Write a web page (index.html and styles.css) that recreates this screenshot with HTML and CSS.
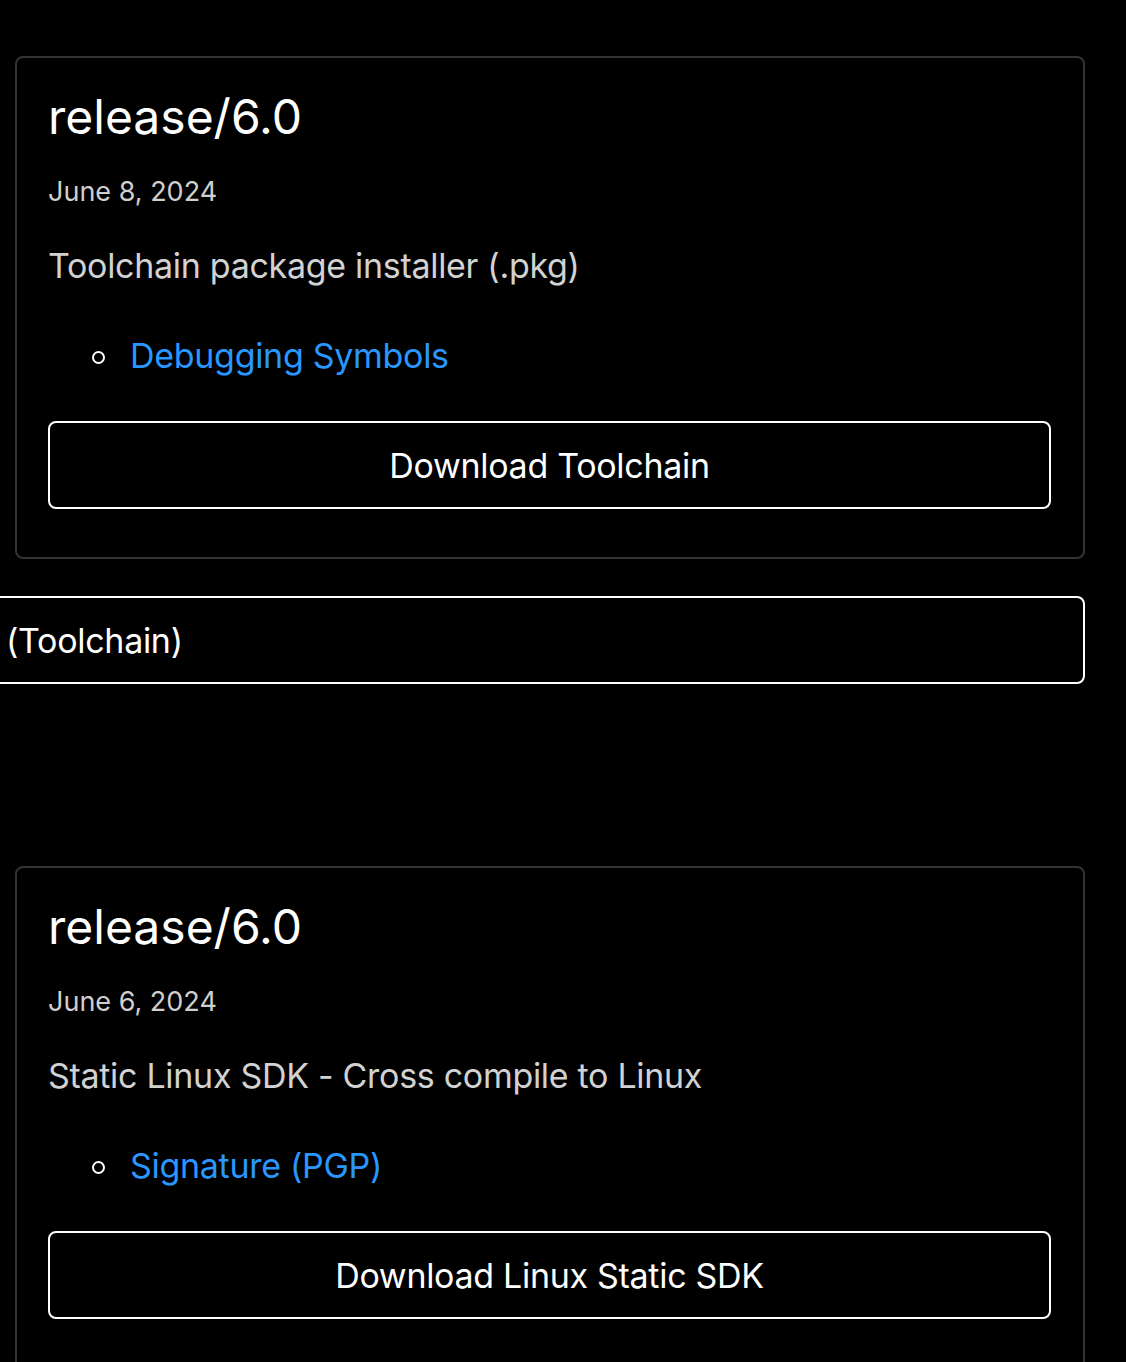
FILE: index.html
```html
<!DOCTYPE html>
<html lang="en">
<head>
<meta charset="utf-8">
<title>Releases</title>
<link rel="stylesheet" href="styles.css">
</head>
<body>
<main class="page">
  <section class="card">
    <h3 class="title">release/6.0</h3>
    <p class="date">June 8, 2024</p>
    <p class="desc">Toolchain package installer (.pkg)</p>
    <ul class="links">
      <li><a href="#">Debugging Symbols</a></li>
    </ul>
    <a class="btn" href="#">Download Toolchain</a>
  </section>

  <a class="btn btn-wide" href="#">(Toolchain)</a>

  <section class="card card-second">
    <h3 class="title">release/6.0</h3>
    <p class="date">June 6, 2024</p>
    <p class="desc">Static Linux SDK - Cross compile to Linux</p>
    <ul class="links">
      <li><a href="#">Signature (PGP)</a></li>
    </ul>
    <a class="btn" href="#">Download Linux Static SDK</a>
  </section>
</main>
</body>
</html>
```
FILE: styles.css
```css
html, body {
  margin: 0;
  padding: 0;
  background: #000;
  overflow: hidden;
}

body {
  font-family: Inter, "Noto Sans", "Liberation Sans", sans-serif;
  color: #fff;
}

.page {
  display: flex;
  flex-direction: column;
  padding: 56px 41px 0 15px;
}

.card {
  border: 2px solid #333;
  border-radius: 8px;
  padding: 30px 32px 32px 31px;
  display: flex;
  flex-direction: column;
}

.card-second {
  margin-top: 182px;
  padding-bottom: 200px;
}

.title {
  margin: 0;
  font-size: 48px;
  font-weight: 400;
  line-height: 58px;
  letter-spacing: 0;
  color: #fff;
}

.date {
  margin: 28px 0 0;
  font-size: 27px;
  line-height: 36px;
  color: #cfcfcf;
}

.desc {
  margin: 32px 0 0;
  font-size: 34px;
  line-height: 48px;
  letter-spacing: -0.3px;
  color: #d2d2d2;
}

.links {
  margin: 42px 0 0;
  padding-left: 44px;
  list-style: none;
  font-size: 34px;
  line-height: 48px;
  letter-spacing: -0.3px;
}

.links li {
  display: flex;
  align-items: center;
}

.links li::before {
  content: "";
  width: 9px;
  height: 9px;
  border: 2px solid #fff;
  border-radius: 50%;
  margin: 2px 25px 0 0;
  flex: none;
}

.links a {
  color: #2997ff;
  text-decoration: none;
}

.btn {
  margin-top: 41px;
  margin-bottom: 16px;
  height: 88px;
  box-sizing: border-box;
  border: 2px solid #fff;
  border-radius: 8px;
  display: flex;
  align-items: center;
  justify-content: center;
  color: #fff;
  text-decoration: none;
  font-size: 34px;
  letter-spacing: -0.3px;
}

.btn-wide {
  margin: 37px 0 0 -40px;
  justify-content: flex-start;
  padding-left: 29px;
}
```
